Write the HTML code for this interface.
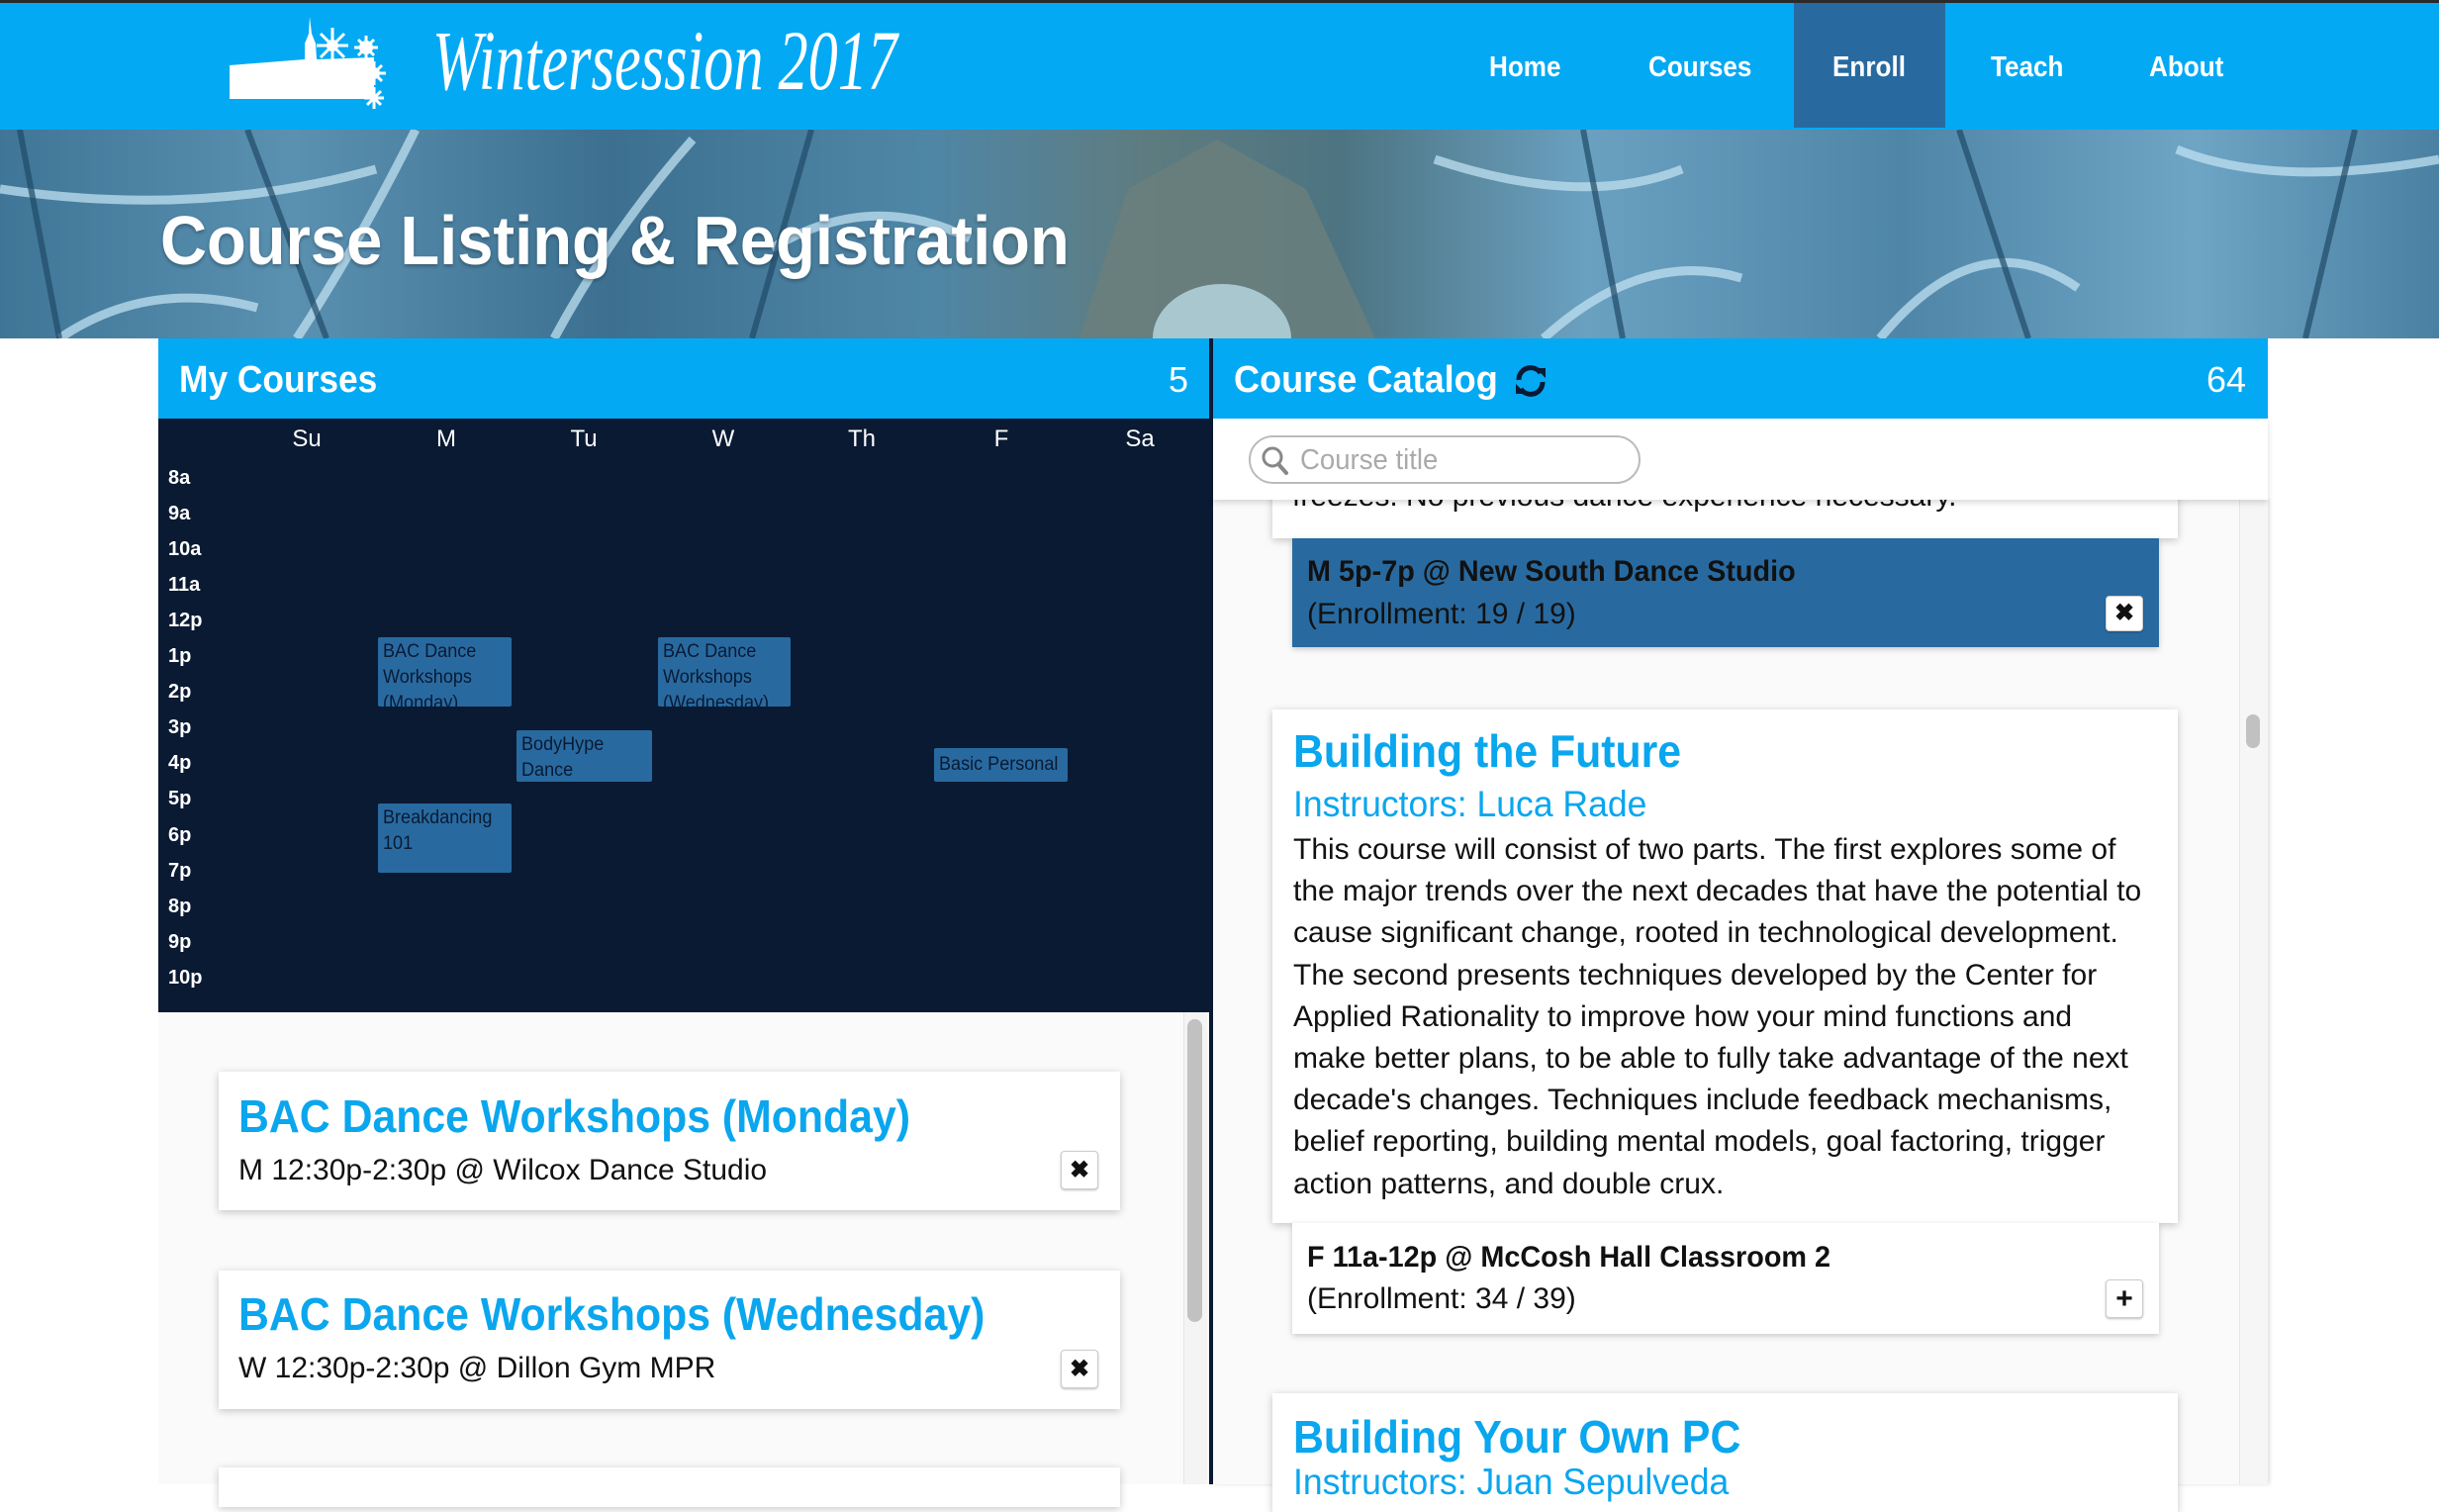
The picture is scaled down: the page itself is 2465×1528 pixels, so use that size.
<!DOCTYPE html>
<html><head><meta charset="utf-8">
<style>
*{margin:0;padding:0;box-sizing:border-box}
html,body{width:2465px;height:1500px;overflow:hidden;background:#fff;font-family:"Liberation Sans",sans-serif}
.a{position:absolute}
.s{display:inline-block;transform:scaleX(.95);transform-origin:0 50%;white-space:nowrap}
.nav{left:0;top:0;width:2465px;height:131px;background:#04a9f4;border-top:3px solid #2a2a2a}
.nv{top:48px;color:#fff;font-size:29px;line-height:40px;font-weight:bold}
.hero{left:0;top:131px;width:2465px;height:211px;overflow:hidden;background:linear-gradient(90deg,#3f7596 0%,#5a90b0 12%,#3d7090 25%,#4f86a6 38%,#5e7c80 47%,#4d7482 55%,#6aa0c0 65%,#4f86a8 78%,#6ea4c4 90%,#4a80a2 100%)}
.ph{left:0;top:342px;height:81px;background:#04a9f4;color:#fff}
.ev{background:#286aa0;color:#0a1a33;font-size:19px;line-height:26px;padding:2px 5px;border-radius:2px;overflow:hidden}
.tl{left:170px;color:#fff;font-size:20px;font-weight:bold;line-height:24px}
.dl{top:430px;color:#fff;font-size:24px;line-height:28px;width:80px;margin-left:-40px;text-align:center}
.card{background:#fff;box-shadow:0 2px 8px rgba(0,0,0,.22)}
.ct{color:#0aa6ee;font-weight:bold;font-size:46px;line-height:56px}
.ct .s{transform:scaleX(.93)}
.tx{color:#111;font-size:30px;line-height:40px}
.tx .s{transform:none}
.tx.b .s{transform:scaleX(.96)}
.btn{width:38px;height:39px;background:#fff;border:1px solid #ccc;border-radius:4px;box-shadow:0 1px 2px rgba(0,0,0,.25);color:#111;font-weight:bold;font-size:24px;line-height:37px;text-align:center}
</style></head><body>

<div class="a nav"></div>
<svg class="a" style="left:228px;top:14px" width="175" height="98" viewBox="0 0 175 98">
<path d="M4 52 L80 46 L80 30 L84 20 L85 3 L87 20 L91 30 L92 46 L150 44 L150 86 L4 86 Z" fill="#fff"/>
<g stroke="#fff" stroke-width="3" fill="none">
<path d="M108 14 L108 50 M92 32 L124 32 M96 20 L120 44 M120 20 L96 44"/>
<path d="M142 22 L142 46 M130 34 L154 34 M134 26 L150 42 M150 26 L134 42"/>
<path d="M150 48 L150 72 M138 60 L162 60 M142 52 L158 68 M158 52 L142 68"/>
<path d="M150 74 L150 96 M140 85 L160 85 M143 78 L157 92 M157 78 L143 92"/>
</g>
<circle cx="108" cy="32" r="6" fill="#fff"/><circle cx="142" cy="34" r="7" fill="#fff"/><circle cx="150" cy="60" r="6" fill="#fff"/>
</svg>
<div class="a" style="left:437px;top:16px;color:#fff;font-family:'Liberation Serif',serif;font-style:italic;font-size:86px;line-height:90px;white-space:nowrap"><span class="s" style="transform:scaleX(.70)">Wintersession 2017</span></div>
<div class="a" style="left:1813px;top:3px;width:153px;height:126px;background:#286aa0"></div>
<div class="a nv" style="left:1505px"><span class="s" style="transform:scaleX(.9)">Home</span></div>
<div class="a nv" style="left:1666px"><span class="s" style="transform:scaleX(.9)">Courses</span></div>
<div class="a nv" style="left:1852px"><span class="s" style="transform:scaleX(.9)">Enroll</span></div>
<div class="a nv" style="left:2012px"><span class="s" style="transform:scaleX(.9)">Teach</span></div>
<div class="a nv" style="left:2172px"><span class="s" style="transform:scaleX(.9)">About</span></div>

<div class="a hero">
<svg width="2465" height="211" style="position:absolute;left:0;top:0">
<path d="M1090 211 L1140 60 L1230 10 L1320 60 L1390 211 Z" fill="#6b7f7c" opacity=".8"/>
<ellipse cx="1235" cy="211" rx="70" ry="55" fill="#a9c7cf"/>
<g stroke="#bfe0f0" stroke-width="9" fill="none" opacity=".75">
<path d="M0 60 Q200 90 380 40"/><path d="M300 211 Q360 120 420 0"/><path d="M560 211 Q620 100 700 10"/>
<path d="M1450 30 Q1600 80 1700 40"/><path d="M1560 211 Q1660 120 1760 150"/><path d="M1900 211 Q2000 90 2100 160"/>
<path d="M2200 20 Q2300 60 2465 30"/><path d="M60 211 Q150 150 260 180"/><path d="M780 120 Q880 60 980 110"/>
</g>
<g stroke="#1f4a66" stroke-width="6" fill="none" opacity=".7">
<path d="M250 0 L330 211"/><path d="M820 0 L760 211"/><path d="M1600 0 L1640 211"/><path d="M2380 0 L2330 211"/><path d="M1980 0 L2050 211"/><path d="M20 0 L60 211"/>
</g>
</svg>
<div class="a" style="left:162px;top:72px;color:#fff;font-size:70px;font-weight:bold;line-height:80px;text-shadow:0 2px 4px rgba(0,0,0,.3)"><span class="s" style="transform:scaleX(.93)">Course Listing &amp; Registration</span></div>
</div>

<div class="a ph" style="left:160px;width:1063px"></div>
<div class="a" style="left:181px;top:362px;color:#fff;font-size:38px;font-weight:bold;line-height:44px"><span class="s" style="transform:scaleX(.93)">My Courses</span></div>
<div class="a" style="left:1181px;top:362px;color:#fff;font-size:36px;line-height:44px">5</div>
<div class="a" style="left:160px;top:423px;width:1063px;height:600px;background:#0a1a33"></div>
<div class="a dl" style="left:310px">Su</div><div class="a dl" style="left:451px">M</div><div class="a dl" style="left:590px">Tu</div><div class="a dl" style="left:731px">W</div><div class="a dl" style="left:871px">Th</div><div class="a dl" style="left:1012px">F</div><div class="a dl" style="left:1152px">Sa</div>
<div class="a tl" style="top:471px">8a</div><div class="a tl" style="top:507px">9a</div><div class="a tl" style="top:543px">10a</div><div class="a tl" style="top:579px">11a</div><div class="a tl" style="top:615px">12p</div><div class="a tl" style="top:651px">1p</div><div class="a tl" style="top:687px">2p</div><div class="a tl" style="top:723px">3p</div><div class="a tl" style="top:759px">4p</div><div class="a tl" style="top:795px">5p</div><div class="a tl" style="top:832px">6p</div><div class="a tl" style="top:868px">7p</div><div class="a tl" style="top:904px">8p</div><div class="a tl" style="top:940px">9p</div><div class="a tl" style="top:976px">10p</div>
<div class="a ev" style="left:382px;top:644px;width:135px;height:70px"><span class="s">BAC Dance<br>Workshops<br>(Monday)</span></div>
<div class="a ev" style="left:665px;top:644px;width:134px;height:70px"><span class="s">BAC Dance<br>Workshops<br>(Wednesday)</span></div>
<div class="a ev" style="left:522px;top:738px;width:137px;height:52px"><span class="s">BodyHype<br>Dance</span></div>
<div class="a ev" style="left:944px;top:756px;width:135px;height:34px;line-height:30px"><span class="s">Basic Personal</span></div>
<div class="a ev" style="left:382px;top:812px;width:135px;height:70px"><span class="s">Breakdancing<br>101</span></div>

<div class="a" style="left:160px;top:1023px;width:1063px;height:477px;background:#fafafa"></div>
<div class="a" style="left:1196px;top:1023px;width:24px;height:477px;background:#f4f4f4;border-left:1px solid #e6e6e6"></div>
<div class="a" style="left:1200px;top:1030px;width:15px;height:306px;background:#c1c1c1;border-radius:8px"></div>
<div class="a card" style="left:221px;top:1083px;width:911px;height:140px"></div>
<div class="a ct" style="left:241px;top:1100px"><span class="s">BAC Dance Workshops (Monday)</span></div>
<div class="a tx" style="left:241px;top:1163px"><span class="s">M 12:30p-2:30p @ Wilcox Dance Studio</span></div>
<div class="a btn" style="left:1072px;top:1163px">✖</div>
<div class="a card" style="left:221px;top:1284px;width:911px;height:140px"></div>
<div class="a ct" style="left:241px;top:1300px"><span class="s">BAC Dance Workshops (Wednesday)</span></div>
<div class="a tx" style="left:241px;top:1363px"><span class="s">W 12:30p-2:30p @ Dillon Gym MPR</span></div>
<div class="a btn" style="left:1072px;top:1364px">✖</div>
<div class="a card" style="left:221px;top:1483px;width:911px;height:40px"></div>

<div class="a" style="left:1222px;top:342px;width:4px;height:1158px;background:#0a1a33"></div>

<div class="a" style="left:1226px;top:505px;width:1066px;height:995px;background:#fafafa;box-shadow:2px 0 4px rgba(0,0,0,.12)"></div>
<div class="a" style="left:2263px;top:505px;width:29px;height:995px;background:#f6f6f6;border-left:1px solid #e6e6e6"></div>
<div class="a" style="left:2270px;top:722px;width:14px;height:34px;background:#c1c1c1;border-radius:7px"></div>
<div class="a card" style="left:1286px;top:440px;width:915px;height:104px"></div>
<div class="a tx" style="left:1306px;top:482px"><span class="s">freezes. No previous dance experience necessary.</span></div>
<div class="a" style="left:1306px;top:544px;width:876px;height:110px;background:#286aa0;box-shadow:0 2px 6px rgba(0,0,0,.2)"></div>
<div class="a tx b" style="left:1321px;top:558px;font-weight:bold"><span class="s">M 5p-7p @ New South Dance Studio</span></div>
<div class="a tx" style="left:1321px;top:601px"><span class="s">(Enrollment: 19 / 19)</span></div>
<div class="a btn" style="left:2128px;top:602px;height:36px;line-height:34px">✖</div>

<div class="a card" style="left:1286px;top:717px;width:915px;height:519px"></div>
<div class="a ct" style="left:1307px;top:731px"><span class="s">Building the Future</span></div>
<div class="a" style="left:1307px;top:791px;color:#0aa6ee;font-size:37px;line-height:44px"><span class="s" style="transform:scaleX(.96)">Instructors: Luca Rade</span></div>
<div class="a tx" style="left:1307px;top:838px;line-height:42.2px"><span class="s">This course will consist of two parts. The first explores some of<br>the major trends over the next decades that have the potential to<br>cause significant change, rooted in technological development.<br>The second presents techniques developed by the Center for<br>Applied Rationality to improve how your mind functions and<br>make better plans, to be able to fully take advantage of the next<br>decade's changes. Techniques include feedback mechanisms,<br>belief reporting, building mental models, goal factoring, trigger<br>action patterns, and double crux.</span></div>
<div class="a" style="left:1306px;top:1236px;width:876px;height:112px;background:#fff;box-shadow:0 2px 6px rgba(0,0,0,.2)"></div>
<div class="a tx b" style="left:1321px;top:1251px;font-weight:bold"><span class="s">F 11a-12p @ McCosh Hall Classroom 2</span></div>
<div class="a tx" style="left:1321px;top:1293px"><span class="s">(Enrollment: 34 / 39)</span></div>
<div class="a btn" style="left:2128px;top:1293px;font-size:30px">+</div>
<div class="a card" style="left:1286px;top:1408px;width:915px;height:120px"></div>
<div class="a ct" style="left:1307px;top:1424px"><span class="s">Building Your Own PC</span></div>
<div class="a" style="left:1307px;top:1476px;color:#0aa6ee;font-size:37px;line-height:44px"><span class="s" style="transform:scaleX(.96)">Instructors: Juan Sepulveda</span></div>

<div class="a" style="left:1226px;top:423px;width:1066px;height:82px;background:#fff;box-shadow:0 3px 6px rgba(0,0,0,.15)"></div>
<div class="a" style="left:1262px;top:440px;width:396px;height:49px;border:2px solid #bbb;border-radius:25px;background:#fff"></div>
<svg class="a" style="left:1274px;top:450px" width="30" height="32" viewBox="0 0 30 32"><circle cx="12" cy="12" r="9" fill="none" stroke="#888" stroke-width="3"/><path d="M18 19 L26 28" stroke="#888" stroke-width="4" stroke-linecap="round"/></svg>
<div class="a" style="left:1314px;top:446px;color:#aaa;font-size:29px;line-height:38px"><span class="s">Course title</span></div>

<div class="a ph" style="left:1226px;width:1066px"></div>
<div class="a" style="left:1247px;top:362px;color:#fff;font-size:38px;font-weight:bold;line-height:44px"><span class="s">Course Catalog</span></div>
<svg class="a" style="left:1528px;top:366px" width="38" height="38" viewBox="0 0 38 38"><g fill="none" stroke="#0a1a33" stroke-width="5"><path d="M7 18 A12 12 0 0 1 29 11"/><path d="M31 20 A12 12 0 0 1 9 27"/></g><path d="M24 6 L34 6 L34 16 Z" fill="#0a1a33"/><path d="M14 32 L4 32 L4 22 Z" fill="#0a1a33"/></svg>
<div class="a" style="left:2230px;top:362px;color:#fff;font-size:36px;line-height:44px">64</div>
</body></html>
